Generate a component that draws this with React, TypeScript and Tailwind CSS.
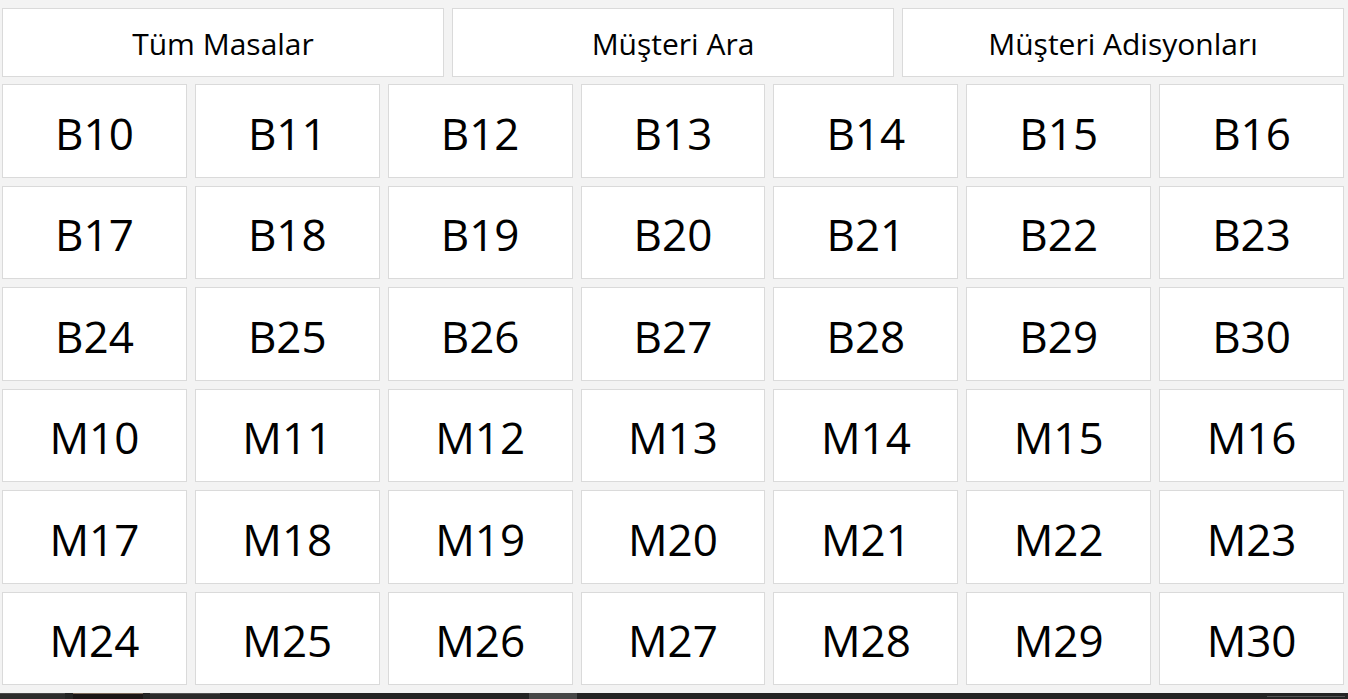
import React from 'react';

const topButtons = ['Tüm Masalar', 'Müşteri Ara', 'Müşteri Adisyonları'];

const tables: string[] = [
  ...Array.from({ length: 21 }, (_, i) => `B${i + 10}`),
  ...Array.from({ length: 21 }, (_, i) => `M${i + 10}`),
];

export default function App() {
  return (
    <div
      className="flex h-[699px] w-full flex-col overflow-hidden bg-[#f3f3f3] text-black"
      style={{ fontFamily: '"Open Sans", "Noto Sans", sans-serif' }}
    >
      <div className="pl-[2px] pr-[4px] pt-2">
        {/* Top tabs */}
        <div className="grid h-[69px] grid-cols-3 gap-2">
          {topButtons.map((label) => (
            <button
              key={label}
              className="flex items-center justify-center border border-[#dadada] bg-white pt-[2px] text-[30px] leading-none"
            >
              {label}
            </button>
          ))}
        </div>

        {/* Table grid */}
        <div className="mt-[7px] grid grid-cols-7 gap-2">
          {tables.map((t) => (
            <button
              key={t}
              className="flex h-[93.5px] items-center justify-center border border-[#dadada] bg-white pt-[4px] text-[44px] leading-none"
            >
              {t}
            </button>
          ))}
        </div>
      </div>

      <div className="flex-1" />

      {/* Taskbar edge */}
      <div className="relative h-[6px] bg-[#242424]">
        <div className="absolute left-0 top-0 h-full w-[65px] border-t border-[#4a4a4a] bg-[#2c2c2c]" />
        <div className="absolute left-[73px] top-0 h-full w-[70px] border-t border-[#7b6b5c] bg-[#1b1616]" />
        <div className="absolute left-[150px] top-0 h-full w-[70px] border-t border-[#555555] bg-[#2b2b2b]" />
        <div className="absolute left-[529px] top-0 h-full w-[48px] bg-[#474747]" />
        <div className="absolute right-[3px] top-[3px] h-[3px] w-[78px] border-t border-[#555555]" />
      </div>
    </div>
  );
}
